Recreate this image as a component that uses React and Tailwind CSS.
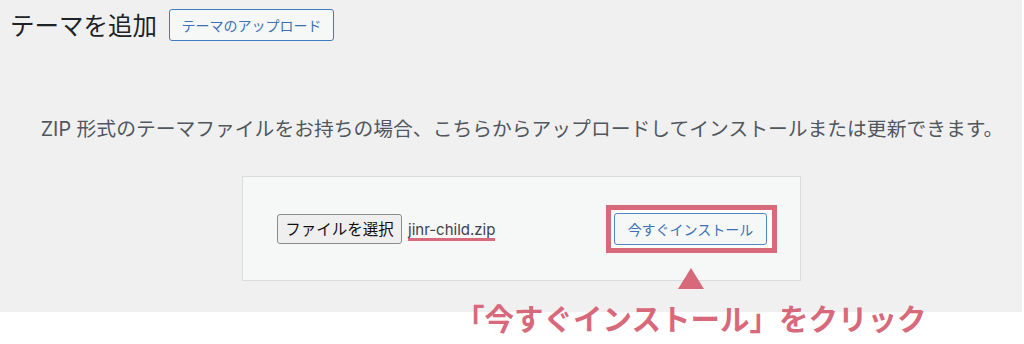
import React from "react";

export default function App() {
  return (
    <div className="relative w-[1024px] h-[344px] bg-white overflow-hidden font-['Inter','Noto_Sans_CJK_JP',sans-serif]">
      <div className="w-[1022px] h-[312px] bg-[#f0f0f1] flex flex-col">
        <div className="flex items-center pl-[10px] pt-[9px]">
          <h1 className="text-[24.5px] leading-[32px] text-[#1d2327] font-['Noto_Sans_CJK_JP',sans-serif]">
            テーマを追加
          </h1>
          <button className="ml-[12px] h-[32px] w-[165px] border border-[#3f7bc0] rounded-[3px] bg-[#f6f7f7] text-[#3a72b5] text-[14px] leading-none font-['Noto_Sans_CJK_JP',sans-serif]">
            テーマのアップロード
          </button>
        </div>
        <p className="mt-[75px] pl-[22px] text-center text-[19.8px] leading-[26px] text-[#50575e]">
          ZIP 形式のテーマファイルをお持ちの場合、こちらからアップロードしてインストールまたは更新できます。
        </p>
        <div className="ml-[242px] mt-[34px] w-[559px] h-[105px] border border-[#dcdcde] bg-[#f6f7f7] flex items-center pl-[34px] pr-[23px]">
          <button className="h-[30px] w-[125px] border border-[#8c8c8c] rounded-[3px] bg-[#efefef] text-[15.5px] text-[#111] leading-none font-['Noto_Sans_CJK_JP',sans-serif]">
            ファイルを選択
          </button>
          <div className="relative ml-[6px]">
            <span className="text-[15px] text-[#3c434a] leading-[20px]">jinr-child.zip</span>
            <div className="absolute left-0 right-0 top-[21px] h-[3px] bg-[#d7697b]" />
          </div>
          <div className="ml-auto border-[5px] border-[#d7697b] bg-white py-[3px] pl-[3px] pr-[5px]">
            <button className="h-[32px] w-[153px] border border-[#4f86c6] rounded-[3px] bg-[#f6f7f7] text-[#3a72b5] text-[14px] leading-none font-['Noto_Sans_CJK_JP',sans-serif]">
              今すぐインストール
            </button>
          </div>
        </div>
      </div>
      <svg className="absolute left-[678px] top-[268px]" width="26" height="21" viewBox="0 0 26 21">
        <polygon points="13,0 26,21 0,21" fill="#d7697b" />
      </svg>
      <div className="absolute left-[455px] top-[303px] text-[29.5px] leading-none font-bold text-[#d7697b] whitespace-nowrap font-['Noto_Sans_CJK_JP',sans-serif]">
        「今すぐインストール」をクリック
      </div>
    </div>
  );
}
